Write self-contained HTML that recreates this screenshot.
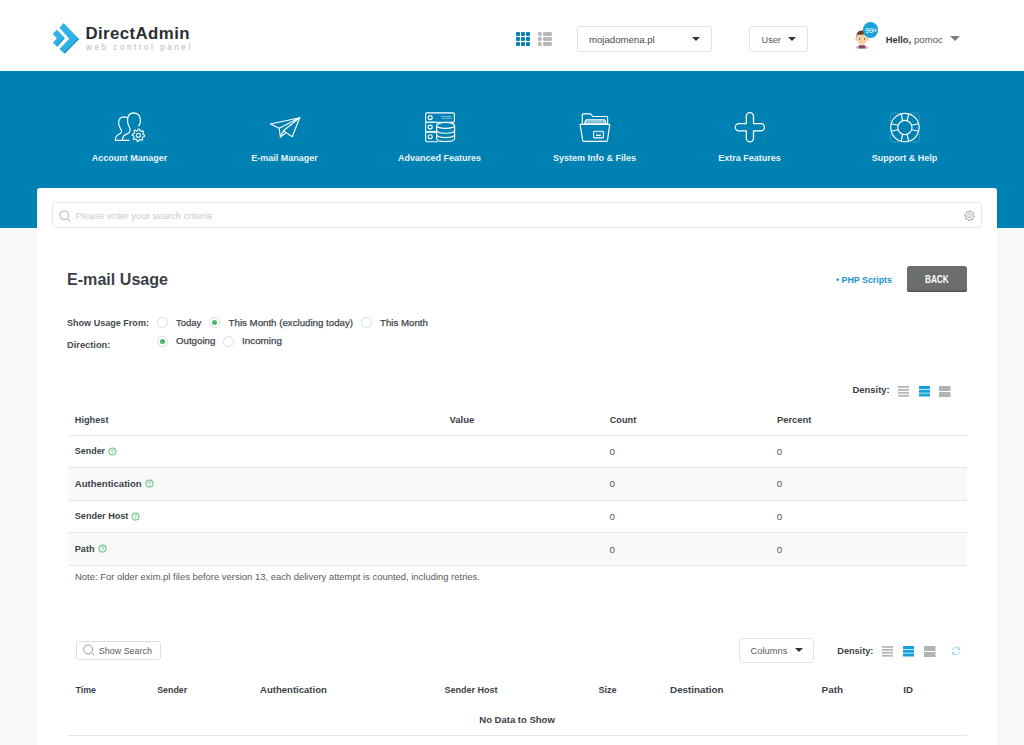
<!DOCTYPE html>
<html><head><meta charset="utf-8"><title>DirectAdmin</title>
<style>
html,body{margin:0;padding:0;}
body{width:1024px;height:745px;overflow:hidden;position:relative;background:#f8f8f8;font-family:"Liberation Sans",sans-serif;}
.a{position:absolute;box-sizing:content-box;}
.t{position:absolute;white-space:nowrap;}
.hdr{position:absolute;left:0;top:0;width:1024px;height:70.6px;background:#fff;}
.band{position:absolute;left:0;top:70.6px;width:1024px;height:157.5px;background:#0081b4;}
.box{border:1px solid #e3e3e3;border-radius:3px;background:#fff;}
.caret{width:0;height:0;border-left:4px solid transparent;border-right:4px solid transparent;border-top:4.5px solid #2f3338;}
.caret2{width:0;height:0;border-left:5px solid transparent;border-right:5px solid transparent;border-top:5px solid #7a7d82;}
.navt{width:140px;text-align:center;font-size:9px;line-height:9px;font-weight:700;color:#eaf4f9;}
.radio{width:9px;height:9px;border:1px solid #dcdcdc;border-radius:50%;background:#fff;}
.hl{height:1px;background:#e7e7e7;}
</style></head><body>
<div class="hdr"></div><div class="band"></div>
<svg class="a" style="left:48px;top:18px" width="40" height="40" viewBox="48 18 40 40">
<polygon points="59.5,27.7 63.6,23.1 79.1,38.9 64.4,53.7 59.5,48.9 69.2,38.7" fill="#30b1e7"/>
<polygon points="79.1,38.9 64.4,53.7 63.9,52.4 78.2,38.3" fill="#1b8fc4"/>
<polygon points="56.9,29.8 52.8,33.8 56.9,38.4 52.8,42.4 57.1,46.7 64.9,38.1" fill="#30b1e7"/>
<polygon points="64.9,38.1 57.1,46.7 56.6,45.6 63.9,38.0" fill="#1b8fc4"/>
</svg><div class="t" style="left:85.50px;top:26px;font-size:16.8px;line-height:16.8px;font-weight:700;color:#2b2e35;letter-spacing:0.42px;">DirectAdmin</div>
<div class="t" style="left:86.00px;top:43px;font-size:8.3px;line-height:8.3px;font-weight:400;color:#b9b9b9;letter-spacing:2.45px;">web control panel</div>
<svg class="a" style="left:516px;top:32px" width="14" height="14" viewBox="0 0 14 14"><rect x="0" y="0" width="4" height="4" rx="0.9" fill="#0a80b8"/><rect x="0" y="5" width="4" height="4" rx="0.9" fill="#0a80b8"/><rect x="0" y="10" width="4" height="4" rx="0.9" fill="#0a80b8"/><rect x="5" y="0" width="4" height="4" rx="0.9" fill="#0a80b8"/><rect x="5" y="5" width="4" height="4" rx="0.9" fill="#0a80b8"/><rect x="5" y="10" width="4" height="4" rx="0.9" fill="#0a80b8"/><rect x="10" y="0" width="4" height="4" rx="0.9" fill="#0a80b8"/><rect x="10" y="5" width="4" height="4" rx="0.9" fill="#0a80b8"/><rect x="10" y="10" width="4" height="4" rx="0.9" fill="#0a80b8"/></svg><svg class="a" style="left:538px;top:32px" width="14" height="14" viewBox="0 0 14 14"><rect x="0" y="0" width="3.6" height="4" rx="1.2" fill="#b8b8b8"/><rect x="5" y="0" width="9" height="4" rx="1.4" fill="#b8b8b8"/><rect x="0" y="5" width="3.6" height="4" rx="1.2" fill="#b8b8b8"/><rect x="5" y="5" width="9" height="4" rx="1.4" fill="#b8b8b8"/><rect x="0" y="10" width="3.6" height="4" rx="1.2" fill="#b8b8b8"/><rect x="5" y="10" width="9" height="4" rx="1.4" fill="#b8b8b8"/></svg><div class="a box" style="left:577px;top:26px;width:133px;height:24px;"></div><div class="t" style="left:589.00px;top:35px;font-size:9.6px;line-height:9.6px;font-weight:400;color:#444a52;">mojadomena.pl</div>
<div class="a caret" style="left:692px;top:37px;"></div><div class="a box" style="left:749px;top:26px;width:57px;height:24px;"></div><div class="t" style="left:761.50px;top:36px;font-size:9.2px;line-height:9.2px;font-weight:400;color:#555a60;">User</div>
<div class="a caret" style="left:788px;top:37px;"></div><svg class="a" style="left:850px;top:26px" width="22" height="26" viewBox="850 26 22 26">
<path d="M855.6,48.6 Q856.2,45.2 862,45 Q867.8,45.2 868.4,48.6 Z" fill="#f39bc0"/>
<path d="M858.6,48.6 L859.2,45.3 L864.8,45.3 L865.4,48.6 Z" fill="#6e5663"/>
<circle cx="856.6" cy="39.6" r="1.3" fill="#f3c39a"/><circle cx="867.4" cy="39.6" r="1.3" fill="#f3c39a"/>
<ellipse cx="862" cy="38.8" rx="5.2" ry="5.9" fill="#f7d0a8"/>
<path d="M856.4,38.6 Q855.6,30.6 861.6,30.4 Q864.6,29.8 866.2,31.6 Q867.8,33.4 867.5,37.2 Q866.6,34.6 864.8,34.2 Q861,35 857.6,34.4 Q857,35.8 856.4,38.6 Z" fill="#6b3c22"/>
<rect x="859.1" y="38.1" width="0.9" height="1.6" fill="#5a4a40"/><rect x="864" y="38.1" width="0.9" height="1.6" fill="#5a4a40"/>
</svg><div class="a" style="left:863.1px;top:22.4px;width:15.4px;height:15.4px;border-radius:50%;background:#1ba3df;"></div><div class="t" style="left:865.00px;top:27px;font-size:8px;line-height:8px;font-weight:400;color:#ffffff;letter-spacing:-0.55px;">99+</div>
<div class="t" style="left:885.80px;top:36px;font-size:9.3px;line-height:9.3px;font-weight:700;color:#33373d;">Hello,</div>
<div class="t" style="left:914.00px;top:35px;font-size:9.6px;line-height:9.6px;font-weight:400;color:#555a60;">pomoc</div>
<div class="a caret2" style="left:950px;top:36px;"></div><svg class="a" style="left:113px;top:110px" width="34" height="34" viewBox="113 110 34 34" fill="none" stroke="#fff" stroke-width="1.15" stroke-linecap="round" stroke-linejoin="round">
<path d="M115.4,140.3 L115.4,138.6 Q115.6,136.2 118.6,134.6 Q121.4,133 121.6,131.6 Q121.5,129.8 120,127.6 Q118.4,125.4 118.7,122.2 Q119.2,117 123.8,116.9 Q126.5,117 127.8,118.2"/>
<path d="M115.4,140.3 L129,140.3"/>
<path d="M138.4,125.8 Q139.8,125.2 140.2,123.2 Q140.4,121.6 140.2,118.6 Q139.4,113.2 133.6,112.9 Q128,113.3 127.6,118.8 Q127.3,122 128.3,124.8 Q129.9,128 130.2,130.2 Q129.9,132.6 127.4,133.6 Q123.2,135.4 122.6,138 L122.6,140.3"/>
<polygon points="138.40,129.00 139.61,129.12 140.16,130.95 140.96,131.38 142.78,130.82 143.56,131.76 142.65,133.44 142.91,134.30 144.60,135.20 144.48,136.41 142.65,136.96 142.22,137.76 142.78,139.58 141.84,140.36 140.16,139.45 139.30,139.71 138.40,141.40 137.19,141.28 136.64,139.45 135.84,139.02 134.02,139.58 133.24,138.64 134.15,136.96 133.89,136.10 132.20,135.20 132.32,133.99 134.15,133.44 134.58,132.64 134.02,130.82 134.96,130.04 136.64,130.95 137.50,130.69" fill="none" stroke="#fff" stroke-width="1.1" stroke-linejoin="round"/><circle cx="138.4" cy="135.2" r="2.0" fill="none" stroke="#fff" stroke-width="1.1"/></svg><svg class="a" style="left:268px;top:115px" width="34" height="25" viewBox="268 115 34 25" fill="none" stroke="#fff" stroke-width="1.15" stroke-linejoin="round" stroke-linecap="round">
<path d="M270.4,124 L299.7,117.7 L279.2,128.3 Z"/>
<path d="M299.7,117.7 L292.2,136.7 L283.4,130.7"/>
<path d="M299.7,117.7 L283.4,130.7 L280.4,137 L279.2,128.3"/>
<path d="M280.4,137 L285.2,133.2"/>
</svg><svg class="a" style="left:423px;top:110px" width="34" height="34" viewBox="423 110 34 34" fill="none" stroke="#fff" stroke-width="1.15" stroke-linejoin="round">
<rect x="425.6" y="112.8" width="28.8" height="9.4" rx="1.4"/>
<path d="M436.6,122.2 L427,122.2 Q425.6,122.2 425.6,123.6 L425.6,130.5 Q425.6,131.9 427,131.9 L436.6,131.9"/>
<path d="M436.6,131.9 L427,131.9 Q425.6,131.9 425.6,133.3 L425.6,140.3 Q425.6,141.7 427,141.7 L438,141.7"/>
<circle cx="430.2" cy="117.6" r="2"/><circle cx="430.2" cy="127.1" r="2"/><circle cx="430.2" cy="136.7" r="2"/>
<ellipse cx="445.6" cy="125.4" rx="9" ry="2.9" fill="#0081b4"/>
<path d="M436.6,125.4 L436.6,138.4 Q436.6,141.5 445.6,141.5 Q454.6,141.5 454.6,138.4 L454.6,125.4"/>
<path d="M436.6,130.2 Q436.6,133.2 445.6,133.2 Q454.6,133.2 454.6,130.2"/>
<path d="M436.6,134.6 Q436.6,137.6 445.6,137.6 Q454.6,137.6 454.6,134.6"/>
<path d="M441.2,116.5 L451.5,116.5 M441.8,118.4 L451.5,118.4" stroke-width="0.8" stroke-dasharray="0.8 0.5"/>
</svg><svg class="a" style="left:578px;top:111px" width="34" height="33" viewBox="578 111 34 33" fill="none" stroke="#fff" stroke-width="1.15" stroke-linejoin="round">
<path d="M582.3,124 L582.3,114.8 Q582.3,113.8 583.3,113.8 L590.6,113.8 L592.8,116.5 L606.6,116.5 Q607.6,116.5 607.6,117.5 L607.6,124"/>
<path d="M584.6,124 L585.4,120.8 Q585.7,119.8 586.8,119.8 L603.8,119.8 Q604.9,119.8 605.2,120.8 L606,124 Z" stroke-width="1.1" fill="rgba(255,255,255,0.5)"/>
<path d="M580.1,124.3 L609.7,124.3 L607.5,140.3 Q607.3,141.3 606.3,141.3 L583.9,141.3 Q582.9,141.3 582.7,140.3 Z"/>
<rect x="593.6" y="131.2" width="9.8" height="6.6" rx="0.8"/>
<path d="M596,135.4 L601,135.4" stroke-width="1.3"/>
<path d="M596.4,133.1 L597.4,133.1 M599.6,133.1 L600.6,133.1" stroke-width="0.7"/>
</svg><svg class="a" style="left:733px;top:110px" width="34" height="34" viewBox="733 110 34 34" fill="none" stroke="#fff" stroke-width="1.3" stroke-linejoin="round">
<path d="M746.3,123.6 L746.3,116.2 A3.6,3.6 0 0 1 753.5,116.2 L753.5,123.6 L760.9,123.6 A3.6,3.6 0 0 1 760.9,130.8 L753.5,130.8 L753.5,138.2 A3.6,3.6 0 0 1 746.3,138.2 L746.3,130.8 L738.9,130.8 A3.6,3.6 0 0 1 738.9,123.6 Z"/>
</svg><svg class="a" style="left:888px;top:110px" width="34" height="34" viewBox="888 110 34 34" fill="none" stroke="#fff" stroke-width="1.15"><circle cx="904.9" cy="127.5" r="14.2"/><circle cx="904.9" cy="127.5" r="7.1"/><line x1="911.65" y1="125.31" x2="918.60" y2="123.75"/><line x1="911.65" y1="129.69" x2="918.60" y2="131.25"/><line x1="907.09" y1="134.25" x2="908.65" y2="141.20"/><line x1="902.71" y1="134.25" x2="901.15" y2="141.20"/><line x1="898.15" y1="129.69" x2="891.20" y2="131.25"/><line x1="898.15" y1="125.31" x2="891.20" y2="123.75"/><line x1="902.71" y1="120.75" x2="901.15" y2="113.80"/><line x1="907.09" y1="120.75" x2="908.65" y2="113.80"/><path d="M890.6,121 L890.6,115 Q890.6,113.1 892.5,113.1 L898.5,113.1 M911.5,113.1 L917.4,113.1 Q919.3,113.1 919.3,115 L919.3,121 M919.3,134 L919.3,140 Q919.3,141.9 917.4,141.9 L911.5,141.9 M898.5,141.9 L892.5,141.9 Q890.6,141.9 890.6,140 L890.6,134" stroke-width="0.75" stroke-dasharray="1 1.2" opacity="0.6"/></svg><div class="t navt" style="left:59.5px;top:154px;">Account Manager</div>
<div class="t navt" style="left:214.5px;top:154px;">E-mail Manager</div>
<div class="t navt" style="left:369.5px;top:154px;">Advanced Features</div>
<div class="t navt" style="left:524.5px;top:154px;">System Info &amp; Files</div>
<div class="t navt" style="left:679.5px;top:154px;">Extra Features</div>
<div class="t navt" style="left:834.5px;top:154px;">Support &amp; Help</div>
<div class="a" style="left:37px;top:187.5px;width:960px;height:600px;background:#fff;border-radius:3px;"></div><div class="a" style="left:52.2px;top:202.4px;width:927.8px;height:23.6px;border:1px solid #e8e8e8;border-radius:3.5px;background:#fff;"></div><svg class="a" style="left:58px;top:209px" width="14" height="14" viewBox="58 209 14 14" fill="none" stroke="#b9b9b9" stroke-width="1.1" stroke-linecap="round"><circle cx="64.3" cy="215.3" r="4.3"/><path d="M67.4,218.4 L70.3,221.3"/></svg><div class="t" style="left:75.40px;top:211px;font-size:9.5px;line-height:9.5px;font-weight:400;color:#c9cbcd;">Please enter your search criteria</div>
<svg class="a" style="left:962px;top:209px" width="15" height="14" viewBox="962 209 15 14"><polygon points="969.50,210.90 970.46,210.99 970.95,212.29 971.61,212.64 972.96,212.34 973.57,213.08 973.01,214.35 973.23,215.06 974.40,215.80 974.31,216.76 973.01,217.25 972.66,217.91 972.96,219.26 972.22,219.87 970.95,219.31 970.24,219.53 969.50,220.70 968.54,220.61 968.05,219.31 967.39,218.96 966.04,219.26 965.43,218.52 965.99,217.25 965.77,216.54 964.60,215.80 964.69,214.84 965.99,214.35 966.34,213.69 966.04,212.34 966.78,211.73 968.05,212.29 968.76,212.07" fill="none" stroke="#9a9a9a" stroke-width="0.9" stroke-linejoin="round"/><circle cx="969.5" cy="215.8" r="1.8" fill="none" stroke="#9a9a9a" stroke-width="0.9"/></svg><div class="t" style="left:67.00px;top:271px;font-size:16.1px;line-height:16.1px;font-weight:700;color:#3a3f47;">E-mail Usage</div>
<div class="t" style="left:835.60px;top:275px;font-size:9.5px;line-height:9.5px;font-weight:700;color:#1793d1;transform:scaleX(0.93);transform-origin:0 0;">• PHP Scripts</div>
<div class="a" style="left:907.3px;top:266px;width:59.7px;height:26px;background:#6c6d6d;border-radius:2.5px;box-shadow:inset 0 -1.5px 0 #555;"></div><div class="t" style="left:925.00px;top:275px;font-size:10px;line-height:10px;font-weight:700;color:#ffffff;transform:scaleX(0.82);transform-origin:0 0;">BACK</div>
<div class="t" style="left:67.00px;top:319px;font-size:9.05px;line-height:9.05px;font-weight:700;color:#454a51;">Show Usage From:</div>
<div class="t" style="left:67.00px;top:341px;font-size:9.3px;line-height:9.3px;font-weight:700;color:#454a51;">Direction:</div>
<div class="a radio" style="left:156.9px;top:316.9px;"></div><div class="t" style="left:176.00px;top:318px;font-size:9.5px;line-height:9.5px;font-weight:400;color:#42474d;-webkit-text-stroke:0.25px #42474d;">Today</div>
<div class="a radio" style="left:209.2px;top:316.9px;"></div><div class="a" style="left:212.2px;top:319.9px;width:5px;height:5px;border-radius:50%;background:#4cb46e;"></div><div class="t" style="left:228.60px;top:318px;font-size:9.7px;line-height:9.7px;font-weight:400;color:#42474d;-webkit-text-stroke:0.25px #42474d;">This Month (excluding today)</div>
<div class="a radio" style="left:361.1px;top:316.9px;"></div><div class="t" style="left:380.00px;top:318px;font-size:9.7px;line-height:9.7px;font-weight:400;color:#42474d;-webkit-text-stroke:0.25px #42474d;">This Month</div>
<div class="a radio" style="left:156.9px;top:335.5px;"></div><div class="a" style="left:159.9px;top:338.5px;width:5px;height:5px;border-radius:50%;background:#4cb46e;"></div><div class="t" style="left:176.00px;top:336px;font-size:9.7px;line-height:9.7px;font-weight:400;color:#42474d;-webkit-text-stroke:0.25px #42474d;">Outgoing</div>
<div class="a radio" style="left:223.1px;top:335.5px;"></div><div class="t" style="left:242.10px;top:336px;font-size:9.8px;line-height:9.8px;font-weight:400;color:#42474d;-webkit-text-stroke:0.25px #42474d;">Incoming</div>
<div class="t" style="left:852.50px;top:385px;font-size:9.45px;line-height:9.45px;font-weight:700;color:#3b3f45;">Density:</div>
<svg class="a" style="left:897.8px;top:385.6px" width="11" height="11" viewBox="0 0 11 11"><rect x="0" y="0.00" width="11" height="1.8" fill="#b5b5b5"/><rect x="0" y="2.95" width="11" height="1.8" fill="#b5b5b5"/><rect x="0" y="5.90" width="11" height="1.8" fill="#b5b5b5"/><rect x="0" y="8.85" width="11" height="1.8" fill="#b5b5b5"/></svg><svg class="a" style="left:918.6px;top:385.6px" width="11" height="11" viewBox="0 0 11 11"><rect x="0" y="0.00" width="11" height="3" rx="0.6" fill="#12a1dd"/><rect x="0" y="3.80" width="11" height="3" rx="0.6" fill="#12a1dd"/><rect x="0" y="7.60" width="11" height="3" rx="0.6" fill="#12a1dd"/></svg><svg class="a" style="left:939.4px;top:385.6px" width="11.5" height="11" viewBox="0 0 11.5 11"><rect x="0" y="0.00" width="11.5" height="5" fill="#b3b3b3"/><rect x="0" y="6.00" width="11.5" height="5" fill="#b3b3b3"/></svg><div class="a hl" style="left:67.5px;top:435px;width:899.8px;"></div><div class="a hl" style="left:67.5px;top:467px;width:899.8px;"></div><div class="a" style="left:67.5px;top:468px;width:899.8px;height:32px;background:#f9f9f9;"></div><div class="a hl" style="left:67.5px;top:500px;width:899.8px;"></div><div class="a hl" style="left:67.5px;top:532px;width:899.8px;"></div><div class="a" style="left:67.5px;top:533px;width:899.8px;height:32px;background:#f9f9f9;"></div><div class="a hl" style="left:67.5px;top:565px;width:899.8px;"></div><div class="t" style="left:74.80px;top:416px;font-size:9.18px;line-height:9.18px;font-weight:700;color:#3b3f45;">Highest</div>
<div class="t" style="left:449.50px;top:415px;font-size:9.5px;line-height:9.5px;font-weight:700;color:#3b3f45;">Value</div>
<div class="t" style="left:609.70px;top:416px;font-size:9.2px;line-height:9.2px;font-weight:700;color:#3b3f45;">Count</div>
<div class="t" style="left:776.90px;top:415px;font-size:9.45px;line-height:9.45px;font-weight:700;color:#3b3f45;">Percent</div>
<div class="t" style="left:74.80px;top:447px;font-size:8.95px;line-height:8.95px;font-weight:700;color:#3b3f45;">Sender</div>
<svg class="a" style="left:108.4px;top:446.5px" width="9" height="9" viewBox="0 0 9 9" fill="none" stroke="#66c18a" stroke-width="1.05"><circle cx="4.5" cy="4.5" r="3.55"/><path d="M3.35,3.75 Q3.35,2.55 4.5,2.55 Q5.65,2.55 5.65,3.6 Q5.65,4.35 4.55,4.85 L4.55,5.5" stroke-width="0.85"/><circle cx="4.55" cy="6.45" r="0.45" fill="#66c18a" stroke="none"/></svg><div class="t" style="left:609.60px;top:447px;font-size:9.9px;line-height:9.9px;font-weight:400;color:#51565c;">0</div>
<div class="t" style="left:776.80px;top:447px;font-size:9.9px;line-height:9.9px;font-weight:400;color:#51565c;">0</div>
<div class="t" style="left:74.80px;top:479px;font-size:9.55px;line-height:9.55px;font-weight:700;color:#3b3f45;">Authentication</div>
<svg class="a" style="left:145.1px;top:479.1px" width="9" height="9" viewBox="0 0 9 9" fill="none" stroke="#66c18a" stroke-width="1.05"><circle cx="4.5" cy="4.5" r="3.55"/><path d="M3.35,3.75 Q3.35,2.55 4.5,2.55 Q5.65,2.55 5.65,3.6 Q5.65,4.35 4.55,4.85 L4.55,5.5" stroke-width="0.85"/><circle cx="4.55" cy="6.45" r="0.45" fill="#66c18a" stroke="none"/></svg><div class="t" style="left:609.60px;top:479px;font-size:9.9px;line-height:9.9px;font-weight:400;color:#51565c;">0</div>
<div class="t" style="left:776.80px;top:479px;font-size:9.9px;line-height:9.9px;font-weight:400;color:#51565c;">0</div>
<div class="t" style="left:74.80px;top:512px;font-size:9.1px;line-height:9.1px;font-weight:700;color:#3b3f45;">Sender Host</div>
<svg class="a" style="left:131.1px;top:511.5px" width="9" height="9" viewBox="0 0 9 9" fill="none" stroke="#66c18a" stroke-width="1.05"><circle cx="4.5" cy="4.5" r="3.55"/><path d="M3.35,3.75 Q3.35,2.55 4.5,2.55 Q5.65,2.55 5.65,3.6 Q5.65,4.35 4.55,4.85 L4.55,5.5" stroke-width="0.85"/><circle cx="4.55" cy="6.45" r="0.45" fill="#66c18a" stroke="none"/></svg><div class="t" style="left:609.60px;top:512px;font-size:9.9px;line-height:9.9px;font-weight:400;color:#51565c;">0</div>
<div class="t" style="left:776.80px;top:512px;font-size:9.9px;line-height:9.9px;font-weight:400;color:#51565c;">0</div>
<div class="t" style="left:74.80px;top:545px;font-size:9.12px;line-height:9.12px;font-weight:700;color:#3b3f45;">Path</div>
<svg class="a" style="left:97.5px;top:544.3px" width="9" height="9" viewBox="0 0 9 9" fill="none" stroke="#66c18a" stroke-width="1.05"><circle cx="4.5" cy="4.5" r="3.55"/><path d="M3.35,3.75 Q3.35,2.55 4.5,2.55 Q5.65,2.55 5.65,3.6 Q5.65,4.35 4.55,4.85 L4.55,5.5" stroke-width="0.85"/><circle cx="4.55" cy="6.45" r="0.45" fill="#66c18a" stroke="none"/></svg><div class="t" style="left:609.60px;top:545px;font-size:9.9px;line-height:9.9px;font-weight:400;color:#51565c;">0</div>
<div class="t" style="left:776.80px;top:545px;font-size:9.9px;line-height:9.9px;font-weight:400;color:#51565c;">0</div>
<div class="t" style="left:75.00px;top:572px;font-size:9.45px;line-height:9.45px;font-weight:400;color:#555a60;">Note: For older exim.pl files before version 13, each delivery attempt is counted, including retries.</div>
<div class="a" style="left:75.5px;top:641.4px;width:83.3px;height:16.2px;border:1px solid #dedede;border-radius:2.5px;"></div><svg class="a" style="left:82px;top:644px" width="14" height="14" viewBox="82 644 14 14" fill="none" stroke="#9c9c9c" stroke-width="1" stroke-linecap="round"><circle cx="88.2" cy="649.4" r="4.5"/><path d="M91.5,652.7 L94,655.4"/></svg><div class="t" style="left:98.80px;top:647px;font-size:8.95px;line-height:8.95px;font-weight:400;color:#555a60;">Show Search</div>
<div class="a box" style="left:739.4px;top:637.5px;width:73px;height:23.5px;"></div><div class="t" style="left:750.60px;top:647px;font-size:9.3px;line-height:9.3px;font-weight:400;color:#555a60;">Columns</div>
<div class="a caret" style="left:795px;top:648.3px;"></div><div class="t" style="left:837.30px;top:647px;font-size:9.15px;line-height:9.15px;font-weight:700;color:#3b3f45;">Density:</div>
<svg class="a" style="left:882.4px;top:646px" width="11" height="11" viewBox="0 0 11 11"><rect x="0" y="0.00" width="11" height="1.8" fill="#b5b5b5"/><rect x="0" y="2.95" width="11" height="1.8" fill="#b5b5b5"/><rect x="0" y="5.90" width="11" height="1.8" fill="#b5b5b5"/><rect x="0" y="8.85" width="11" height="1.8" fill="#b5b5b5"/></svg><svg class="a" style="left:903.2px;top:646px" width="11" height="11" viewBox="0 0 11 11"><rect x="0" y="0.00" width="11" height="3" rx="0.6" fill="#12a1dd"/><rect x="0" y="3.80" width="11" height="3" rx="0.6" fill="#12a1dd"/><rect x="0" y="7.60" width="11" height="3" rx="0.6" fill="#12a1dd"/></svg><svg class="a" style="left:924.0px;top:646px" width="11.5" height="11" viewBox="0 0 11.5 11"><rect x="0" y="0.00" width="11.5" height="5" fill="#b3b3b3"/><rect x="0" y="6.00" width="11.5" height="5" fill="#b3b3b3"/></svg><svg class="a" style="left:950px;top:645px" width="12" height="12" viewBox="950 645 12 12" fill="none" stroke="#7ccdf1" stroke-width="0.8" stroke-linecap="round"><path d="M952.2,650 A4,4 0 0 1 959.6,649.2"/><path d="M959.7,652 A4,4 0 0 1 952.4,652.8"/><path d="M959.8,647.4 L959.7,649.4 L957.8,649.3"/><path d="M952.3,654.6 L952.4,652.6 L954.3,652.7"/></svg><div class="t" style="left:75.50px;top:686px;font-size:8.9px;line-height:8.9px;font-weight:700;color:#3b3f45;">Time</div>
<div class="t" style="left:157.20px;top:686px;font-size:8.85px;line-height:8.85px;font-weight:700;color:#3b3f45;">Sender</div>
<div class="t" style="left:260.00px;top:685px;font-size:9.55px;line-height:9.55px;font-weight:700;color:#3b3f45;">Authentication</div>
<div class="t" style="left:444.40px;top:686px;font-size:9.02px;line-height:9.02px;font-weight:700;color:#3b3f45;">Sender Host</div>
<div class="t" style="left:598.50px;top:686px;font-size:9.04px;line-height:9.04px;font-weight:700;color:#3b3f45;">Size</div>
<div class="t" style="left:670.10px;top:685px;font-size:9.8px;line-height:9.8px;font-weight:700;color:#3b3f45;">Destination</div>
<div class="t" style="left:821.60px;top:685px;font-size:9.86px;line-height:9.86px;font-weight:700;color:#3b3f45;">Path</div>
<div class="t" style="left:903.30px;top:685px;font-size:9.6px;line-height:9.6px;font-weight:700;color:#3b3f45;">ID</div>
<div class="t" style="left:479.30px;top:715px;font-size:9.5px;line-height:9.5px;font-weight:700;color:#3b3f45;">No Data to Show</div>
<div class="a hl" style="left:67.5px;top:734.5px;width:899.8px;"></div>
</body></html>
